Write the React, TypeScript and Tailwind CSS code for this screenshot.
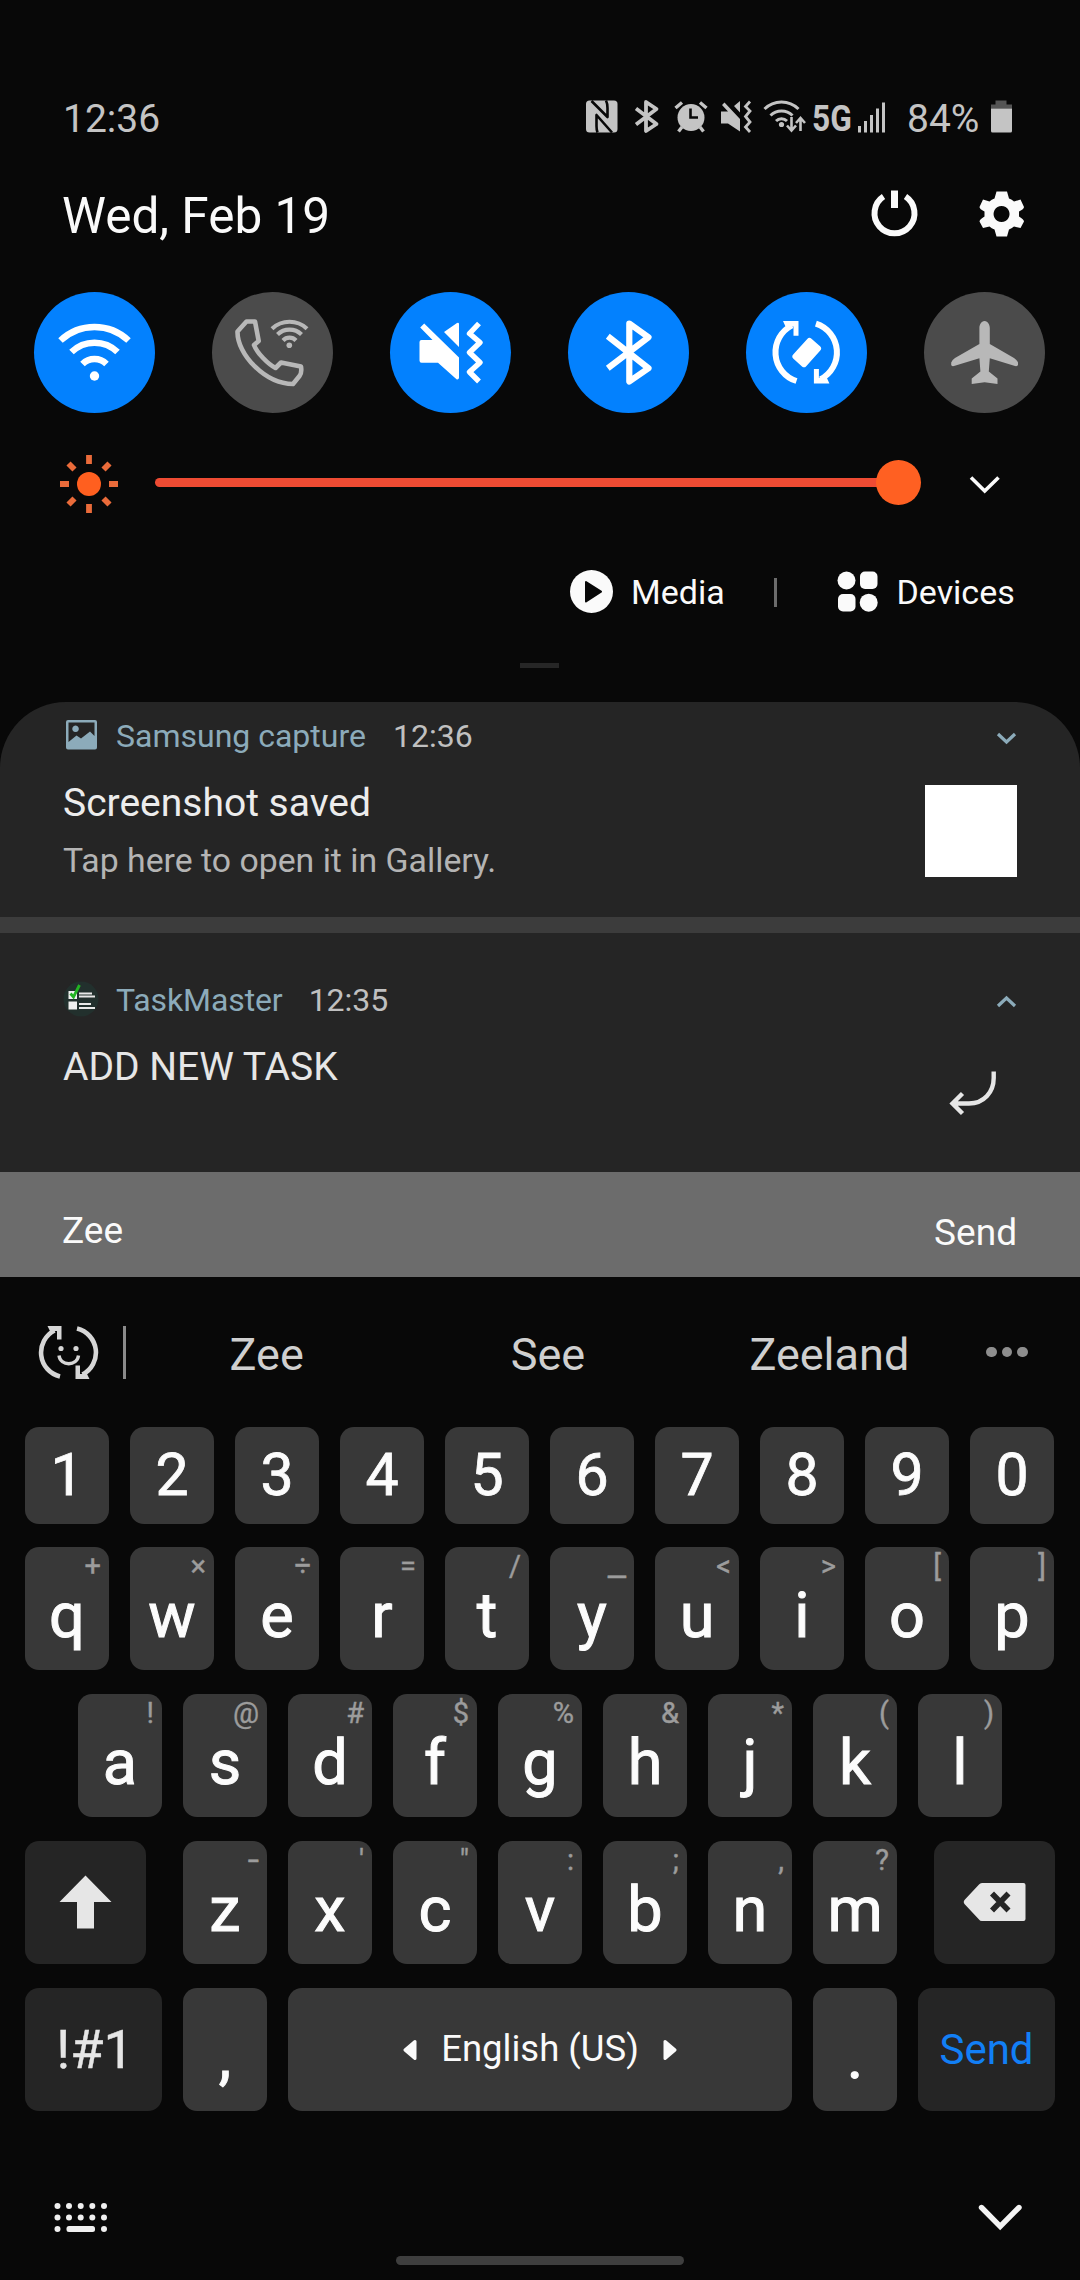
import type { ReactNode } from "react";

type ArtProps = { box: string; className?: string; children: ReactNode };

function Art({ box, className = "", children }: ArtProps) {
  const [, , w, h] = box.split(" ").map(Number);
  return (
    <svg viewBox={box} width={w} height={h} fill="none" className={`block shrink-0 ${className}`}>
      {children}
    </svg>
  );
}

function StatusBar() {
  return (
    <div className="mt-[97px] flex h-[44px] items-center pl-[63px] text-[39px] leading-[44px] text-[#c4c4c4]">
      <span className="w-[522px]">12:36</span>
      <Art box="585 97 168 44">
        <rect x="586" y="100.500" width="31.500" height="32" rx="3.500" fill="#c4c4c4" />
        <path
          d="M591.500 101L607.500 117V108Q607.500 103.500 606 100.500M612 132.500L596.500 115V126Q596.500 130 597.500 132.500"
          stroke="#080808"
          strokeWidth="2.600"
          strokeLinejoin="round"
        />
        <path d="M636 108.500L656.500 124L646 131V102L656.500 109L636 124.500" stroke="#c4c4c4" strokeWidth="3.800" strokeLinejoin="round" />
        <circle cx="691" cy="117.500" r="13.500" fill="#c4c4c4" />
        <path d="M682 127L678.500 131.500M700 127L703.500 131.500M675.500 108L682 102.500M706.500 108L700 102.500" stroke="#c4c4c4" strokeWidth="3.400" />
        <path d="M690.500 108.500V117.500H698" stroke="#080808" strokeWidth="2.600" />
        <path d="M721 111.500H728L722 105L724.500 102.500L740 119V131.500L728 123.500H721ZM734 106L740 101V112.500Z" fill="#c4c4c4" />
        <path d="M750 101.500L745.500 106.500L750 111L745.500 116.500L750 122L745.500 127L750 132" stroke="#c4c4c4" strokeWidth="2.800" />
      </Art>
      <Art box="753 97 59 44">
        <g stroke="#c4c4c4" strokeWidth="3">
          <path d="M764.500 109A24 24 0 0 1 798.500 109M770.500 115.500A15.500 15.500 0 0 1 792.500 115.500M776 121A8 8 0 0 1 787 121" />
          <path d="M791.500 117V130M787 125.500L791.500 130.500L796 125.500M800.500 131V118.500M796 123L800.500 118L805 123" strokeWidth="2.600" />
        </g>
        <circle cx="781.500" cy="124.500" r="2.600" fill="#c4c4c4" />
      </Art>
      <span className="w-[44px] origin-left scale-x-[0.88] text-[36px] font-bold">5G</span>
      <Art box="856 97 51 44">
        <path d="M858 126h3v6.500h-3zM864 121h3v11.500h-3zM870 115h3v17.500h-3zM876 108.500h3v24h-3zM882 102.500h3v30h-3z" fill="#c4c4c4" />
      </Art>
      <span className="w-[83px]">84%</span>
      <Art box="990 97 24 44">
        <path d="M995.500 100.500h11v4h5.500v4h-21v-4h4.500z" fill="#555" />
        <path d="M991 108.500h21v22.500q0 1.500-1.500 1.500h-18q-1.500 0-1.500-1.500z" fill="#c4c4c4" />
      </Art>
    </div>
  );
}

function DateRow() {
  return (
    <div className="mt-[47px] flex h-[56px] items-center pr-14 pl-[62px] text-[49.5px] leading-[56px] text-[#fafafa]">
      <span className="grow">Wed, Feb 19</span>
      <Art box="868 188 54 56" className="mr-[54px]">
        <path d="M883.500 196.600A20 20 0 1 0 905.500 196.600" stroke="#fafafa" strokeWidth="6" />
        <path d="M891 190.500h7V208h-7z" fill="#fafafa" />
      </Art>
      <Art box="976 188 48 56">
        <path
          fillRule="evenodd"
          fill="#fafafa"
          d="M996.500 191.500h10.500l2 7q3 1 5 3l6.500-2 3.500 7.500q0 2-5 4.500v5q5 3 5 5l-3.500 6.500-6.500-1.500q-2.500 2-5 3l-2 7h-10.500l-2-7q-3-1-5-3l-6.500 1.500-3.500-6.500q0-2 5-5v-5q-5-2.500-5-4.500l3.500-7.500 6.500 2q2-2 5-3zM1001.500 206a8 8 0 1 0 .1 0z"
        />
      </Art>
    </div>
  );
}

function Tile({ on, box, children }: { on?: boolean; box: string; children: ReactNode }) {
  return (
    <div className={`size-[121px] rounded-full ${on ? "bg-[#0381fe]" : "bg-[#4b4b4b]"}`}>
      <Art box={box}>{children}</Art>
    </div>
  );
}

const rotateHead = "M783 321H798.500V335.700H793.500V326.500H785.500Z";

function Tiles() {
  return (
    <div className="mt-12 flex justify-between pr-[35px] pl-[34px]">
      <Tile on box="34 292 121 121">
        <g stroke="#fff" strokeWidth="6.500">
          <path d="M60.500 340.500A49.600 49.600 0 0 1 128.500 340.500M71.500 352A33 33 0 0 1 117.500 352M82.500 364A17.200 17.200 0 0 1 106.500 364" />
        </g>
        <circle cx="94.500" cy="376" r="4.700" fill="#fff" />
      </Tile>
      <Tile box="212 292 121 121">
        <g stroke="#b8b8b8" strokeWidth="4.600" strokeLinejoin="round">
          <path d="M246.500 321.500H255L258.700 341L254 345C257 353 268 364 275.500 368L281 362.500L301 366.500Q302 373 299.500 376L293 384C265 384 237 354 237.500 331.500Z" />
          <path d="M272 328.700A25.500 25.500 0 0 1 307 328.700M277.500 334.500A17.200 17.200 0 0 1 301.500 334.500M283 340.500A9 9 0 0 1 296 340.500" strokeWidth="4.200" />
        </g>
        <circle cx="289.300" cy="345.300" r="2.800" fill="#b8b8b8" />
      </Tile>
      <Tile on box="390 292 121 121">
        <path
          d="M421.500 340H432.500L420.200 327.500L424.200 323.500L459 357.500V378Q458.500 380 456.500 379.300L438 362.700H421.500Q419.500 362.700 419.500 360.500V342Q419.500 340 421.500 340ZM444 332L457 323Q459 322.300 459 324V347Z"
          fill="#fff"
        />
        <path d="M479 323.500L469.500 333.500L480 342.500L469.500 352.500L480 362.500L469.500 372L479 381.500" stroke="#fff" strokeWidth="5.400" strokeLinejoin="round" />
      </Tile>
      <Tile on box="568 292 121 121">
        <path d="M607.800 336.300L648.500 368.300L629.300 381.500V323.500L648.500 337.300L607.800 368.300" stroke="#fff" strokeWidth="6.200" strokeLinejoin="round" />
      </Tile>
      <Tile on box="746 292 121 121">
        <path d="M792 325.300A30.200 30.200 0 0 0 796.500 381" stroke="#fff" strokeWidth="6" />
        <path d={rotateHead} fill="#fff" />
        <g transform="rotate(180 806.200 352.300)">
          <path d="M792 325.300A30.200 30.200 0 0 0 796.500 381" stroke="#fff" strokeWidth="6" />
          <path d={rotateHead} fill="#fff" />
        </g>
        <rect x="798" y="339" width="17.500" height="27" rx="3" transform="rotate(42 806.700 352.500)" fill="#fff" />
      </Tile>
      <Tile box="924 292 121 121">
        <path
          d="M984.600 321C988 321 989.800 325 989.800 328V344L1014 358Q1017 360 1018 362.500V365Q1017.500 366.500 1015 366L989.800 358.200L988.800 371.500L997.500 378.500V384L984.600 382.300L971.700 384V378.500L980.400 371.500L979.400 358.200L954 366Q951.500 366.500 951.200 365V362.500Q952 360 955 358L979.400 344V328C979.400 325 981 321 984.600 321Z"
          fill="#b8b8b8"
        />
      </Tile>
    </div>
  );
}

function Brightness() {
  return (
    <div className="mt-[37px] flex h-[66px] items-center">
      <Art box="57 450 64 66" className="ml-[57px]">
        <circle cx="89" cy="484" r="12" fill="#ff5f1f" />
        <path
          d="M89 455v9M89 504v9M60 484h9M109 484h9M68.500 463.500l6 6M103.500 498.500l6 6M68.500 504.500l6-6M103.500 469.500l6-6"
          stroke="#ea6b3a"
          strokeWidth="5.800"
        />
      </Art>
      <div className="mb-[2px] ml-[34px] flex w-[766px] items-center">
        <div className="h-[9px] w-[724px] rounded-l-full bg-[#ee4b33]" />
        <div className="-ml-[3px] size-[45px] rounded-full bg-[#ff6022]" />
      </div>
      <Art box="966 450 38 66" className="ml-[45px]">
        <path d="M971 477.500L984.700 491L998.500 477.500" stroke="#fafafa" strokeWidth="3.600" />
      </Art>
    </div>
  );
}

function MediaRow() {
  return (
    <div className="mt-[52px] flex h-[48px] items-center pl-[570px] text-[34px] leading-[48px] text-[#fafafa]">
      <Art box="570 568 43 48">
        <circle cx="591.500" cy="591.500" r="21.500" fill="#fafafa" />
        <path d="M586 582L601 591.700L586 601.500Z" fill="#080808" stroke="#080808" strokeWidth="2" strokeLinejoin="round" />
      </Art>
      <span className="ml-[18px] w-[143px]">Media</span>
      <div className="h-[29px] w-[3px] bg-[#6c6c6c]" />
      <Art box="837 568 41 48" className="ml-[60px]">
        <g fill="#fafafa">
          <circle cx="846.500" cy="580.500" r="9" />
          <rect x="860" y="571.500" width="17.500" height="17.500" rx="5" />
          <rect x="838" y="594" width="17.500" height="17.500" rx="5" />
          <circle cx="868.700" cy="602.700" r="9" />
        </g>
      </Art>
      <span className="ml-[18.5px]">Devices</span>
    </div>
  );
}

function Notifications() {
  return (
    <div className="mt-[34px]">
      <section className="h-[215px] rounded-t-[66px] bg-[#252525] pt-[12px] pr-[63px] pl-[63px]">
        <div className="flex h-[44px] items-center text-[32px] leading-[44px]">
          <Art box="66 714 31 44" className="ml-[3px]">
            <path
              fillRule="evenodd"
              fill="#8cabba"
              d="M68 720H95Q97 720 97 722V747.500Q97 749.500 95 749.500H68Q66 749.500 66 747.500V722Q66 720 68 720ZM68.500 722.500V742L76.500 735.500L81 738.500L90 731.500L94.500 736V722.500ZM75.500 725.500a3.300 3.300 0 1 0 .1 0z"
            />
          </Art>
          <span className="ml-[19px] text-[#8cabba]">Samsung capture</span>
          <span className="ml-[27px] grow text-[#c0c0c0]">12:36</span>
          <Art box="995 714 22 44">
            <path d="M998 734L1006.500 742L1015 734" stroke="#8cabba" strokeWidth="3.200" />
          </Art>
        </div>
        <div className="flex justify-between">
          <div>
            <div className="mt-[21px] h-[48px] text-[39px] leading-[48px] text-[#ececec]">Screenshot saved</div>
            <div className="mt-[13px] h-[42px] text-[33.8px] leading-[42px] text-[#b4b4b4]">Tap here to open it in Gallery.</div>
          </div>
          <div className="mt-[27px] h-[92px] w-[92px] bg-white" />
        </div>
      </section>
      <div className="h-4 bg-[#3c3c3c]" />
      <section className="h-[239px] bg-[#252525] pt-[45px] pr-[63px] pl-[63px]">
        <div className="flex h-[44px] items-center text-[32px] leading-[44px]">
          <Art box="63 978 36 44">
            <circle cx="81" cy="999" r="17.500" fill="#22302d" />
            <path d="M68.500 991h8.500v8h-8.500zM68.500 1001.500h8.500v8h-8.500z" fill="#f0f0f0" />
            <path d="M79 993.500h13M79 996.500h16M79 1004h12M79 1008h16" stroke="#e8e8e8" strokeWidth="1.800" />
            <path d="M70.500 993.500L73.500 997L79.500 985" stroke="#22b422" strokeWidth="2.800" />
          </Art>
          <span className="ml-[17px] tracking-[-0.1px] text-[#8cabba]">TaskMaster</span>
          <span className="ml-[26px] grow text-[#c0c0c0]">12:35</span>
          <Art box="995 978 22 44">
            <path d="M998 1006L1006.500 998L1015 1006" stroke="#8cabba" strokeWidth="3.200" />
          </Art>
        </div>
        <div className="mt-[22px] flex h-[92px] justify-between">
          <div className="h-[46px] text-[39px] leading-[46px] text-[#e6e6e6]">ADD NEW TASK</div>
          <Art box="949 1044 68 92">
            <path d="M993.700 1071.500V1078C993.700 1092 984 1103.500 969 1103.500H953M962.500 1093.500L952.500 1103.500L962.500 1113.500" stroke="#e6e6e6" strokeWidth="4.400" />
          </Art>
        </div>
      </section>
      <div className="flex h-[105px] justify-between bg-[#6c6c6c] pr-[63px] pl-[62px] text-[37px] leading-[46px] text-[#fafafa]">
        <span className="mt-[36px]">Zee</span>
        <span className="mt-[38px]">Send</span>
      </div>
    </div>
  );
}

function Suggestions() {
  const arc = "M54.500 1330.500A24.700 24.700 0 0 0 60 1376.500";
  const head = "M47.500 1326H61.500V1339.500H57V1331H50Z";
  return (
    <div className="mt-[45px] flex h-[60px] items-center text-[45px] leading-[60px] text-[#cfcfcf]">
      <Art box="38 1322 61 60" className="ml-[38px]">
        <g stroke="#d6d6d6" strokeWidth="4.600">
          <path d={arc} />
          <path d={arc} transform="rotate(180 68.500 1352.500)" />
          <path d="M59 1355.500C60.500 1366.500 77 1366.500 78.500 1355.500" strokeWidth="3.400" />
        </g>
        <g fill="#d6d6d6">
          <path d={head} />
          <path d={head} transform="rotate(180 68.500 1352.500)" />
          <circle cx="61" cy="1348.500" r="2.600" />
          <circle cx="76" cy="1348.500" r="2.600" />
        </g>
      </Art>
      <div className="ml-6 h-[53px] w-[3px] bg-[#8a8a8a]" />
      <div className="grid w-[844px] grid-cols-3 pt-[5px] text-center">
        <span>Zee</span>
        <span>See</span>
        <span>Zeeland</span>
      </div>
      <div className="ml-4 flex gap-[5px]">
        <i className="size-[10.5px] rounded-full bg-[#8e8e8e]" />
        <i className="size-[10.5px] rounded-full bg-[#8e8e8e]" />
        <i className="size-[10.5px] rounded-full bg-[#8e8e8e]" />
      </div>
    </div>
  );
}

function Key({ label, hint = "" }: { label: string; hint?: string }) {
  const wide = hint === "-" || hint === "_";
  return (
    <div className="relative h-[123px] w-[84px] rounded-[14px] bg-[#383838] text-center">
      {hint && (
        <span className={`absolute top-0 right-[8px] text-[29px] leading-[39px] text-[#9c9c9c] [-webkit-text-stroke:0.4px_#9c9c9c] ${wide ? "origin-right scale-x-[1.4]" : ""}`}>
          {hint}
        </span>
      )}
      <div className="pt-[39px] text-[63px] leading-[60px] text-[#fcfcfc] [-webkit-text-stroke:1px_#fcfcfc]">{label}</div>
    </div>
  );
}

const topRow = ["q+", "w×", "e÷", "r=", "t/", "y_", "u<", "i>", "o[", "p]"];
const homeRow = ["a!", "s@", "d#", "f$", "g%", "h&", "j*", "k(", "l)"];
const lowRow = ["z-", "x'", 'c"', "v:", "b;", "n,", "m?"];

function Keyboard() {
  return (
    <div className="mt-[45px] flex flex-col gap-6 px-[25px]">
      <div className="-mb-px flex gap-[21px]">
        {"1234567890".split("").map((d) => (
          <div
            key={d}
            className="h-[97px] w-[84px] rounded-[14px] bg-[#383838] pt-[18px] text-center text-[59px] leading-[60px] text-[#fcfcfc] [-webkit-text-stroke:0.8px_#fcfcfc]"
          >
            {d}
          </div>
        ))}
      </div>
      <div className="flex gap-[21px]">
        {topRow.map((k) => (
          <Key key={k} label={k[0]} hint={k[1]} />
        ))}
      </div>
      <div className="flex justify-center gap-[21px]">
        {homeRow.map((k) => (
          <Key key={k} label={k[0]} hint={k[1]} />
        ))}
      </div>
      <div className="flex justify-between">
        <div className="h-[123px] w-[121px] rounded-[14px] bg-[#252525]">
          <Art box="25 1841 121 123">
            <path d="M85.500 1875.500L111.500 1902H94V1928.500H77V1902H59.500Z" fill="#e6e6e6" />
          </Art>
        </div>
        <div className="flex gap-[21px]">
          {lowRow.map((k) => (
            <Key key={k} label={k[0]} hint={k[1]} />
          ))}
        </div>
        <div className="h-[123px] w-[121px] rounded-[14px] bg-[#252525]">
          <Art box="934 1841 121 123">
            <path d="M982 1883H1023.500Q1025.500 1883 1025.500 1885V1919Q1025.500 1921 1023.500 1921H982Q980 1921 979 1919.500L964.500 1904Q963 1902 964.500 1900L979 1884.500Q980 1883 982 1883Z" fill="#e6e6e6" />
            <path d="M992 1893.500L1008.500 1910.500M1008.500 1893.500L992 1910.500" stroke="#252525" strokeWidth="5.600" />
          </Art>
        </div>
      </div>
      <div className="flex justify-between">
        <div className="h-[123px] w-[137px] rounded-[14px] bg-[#252525] pt-[32px] pl-[3px] text-center text-[54px] leading-[60px] text-[#e6e6e6] [-webkit-text-stroke:0.4px_#e6e6e6]">
          !#1
        </div>
        <Key label="," />
        <div className="flex h-[123px] w-[504px] items-center justify-center gap-[24px] rounded-[14px] bg-[#383838] text-[36.5px] text-[#fafafa]">
          <Art box="403 2038 14 24">
            <path d="M415 2041.500V2058.500L405 2050Z" fill="#fafafa" stroke="#fafafa" strokeWidth="3" strokeLinejoin="round" />
          </Art>
          English (US)
          <Art box="663 2038 14 24">
            <path d="M665 2041.500V2058.500L675 2050Z" fill="#fafafa" stroke="#fafafa" strokeWidth="3" strokeLinejoin="round" />
          </Art>
        </div>
        <Key label="." />
        <div className="h-[123px] w-[137px] rounded-[14px] bg-[#252525] pt-[32px] text-center text-[42px] leading-[60px] text-[#127ff5]">Send</div>
      </div>
    </div>
  );
}

const keyDots = [57.5, 69, 80.7, 92.3, 104];

function NavBar() {
  return (
    <div>
      <div className="mt-[87px] flex h-[40px] justify-between pr-[57px] pl-[54px]">
        <Art box="54 2198 54 40">
          <g fill="#f0f0f0">
            {keyDots.map((x) => (
              <circle key={x} cx={x} cy="2206" r="3" />
            ))}
            {keyDots.map((x) => (
              <circle key={x} cx={x} cy="2217.500" r="3" />
            ))}
            <circle cx="57.500" cy="2229" r="3" />
            <circle cx="104" cy="2229" r="3" />
            <rect x="66.500" y="2226" width="28.500" height="6" rx="2.500" />
          </g>
        </Art>
        <Art box="977 2198 46 40">
          <path d="M981.500 2207.500L1000.200 2226.500L1019 2207.500" stroke="#f4f4f4" strokeWidth="5.400" strokeLinecap="round" />
        </Art>
      </div>
      <div className="mx-auto mt-[18px] h-[9px] w-[288px] rounded-full bg-[#3e3e3e]" />
    </div>
  );
}

export default function App() {
  return (
    <div className="flex h-[2280px] w-[1080px] flex-col overflow-hidden bg-[#080808] font-['Roboto',sans-serif]">
      <StatusBar />
      <DateRow />
      <Tiles />
      <Brightness />
      <MediaRow />
      <div className="mt-[47px] ml-[520px] h-[5px] w-[39px] bg-[#262626]" />
      <Notifications />
      <Suggestions />
      <Keyboard />
      <NavBar />
    </div>
  );
}
